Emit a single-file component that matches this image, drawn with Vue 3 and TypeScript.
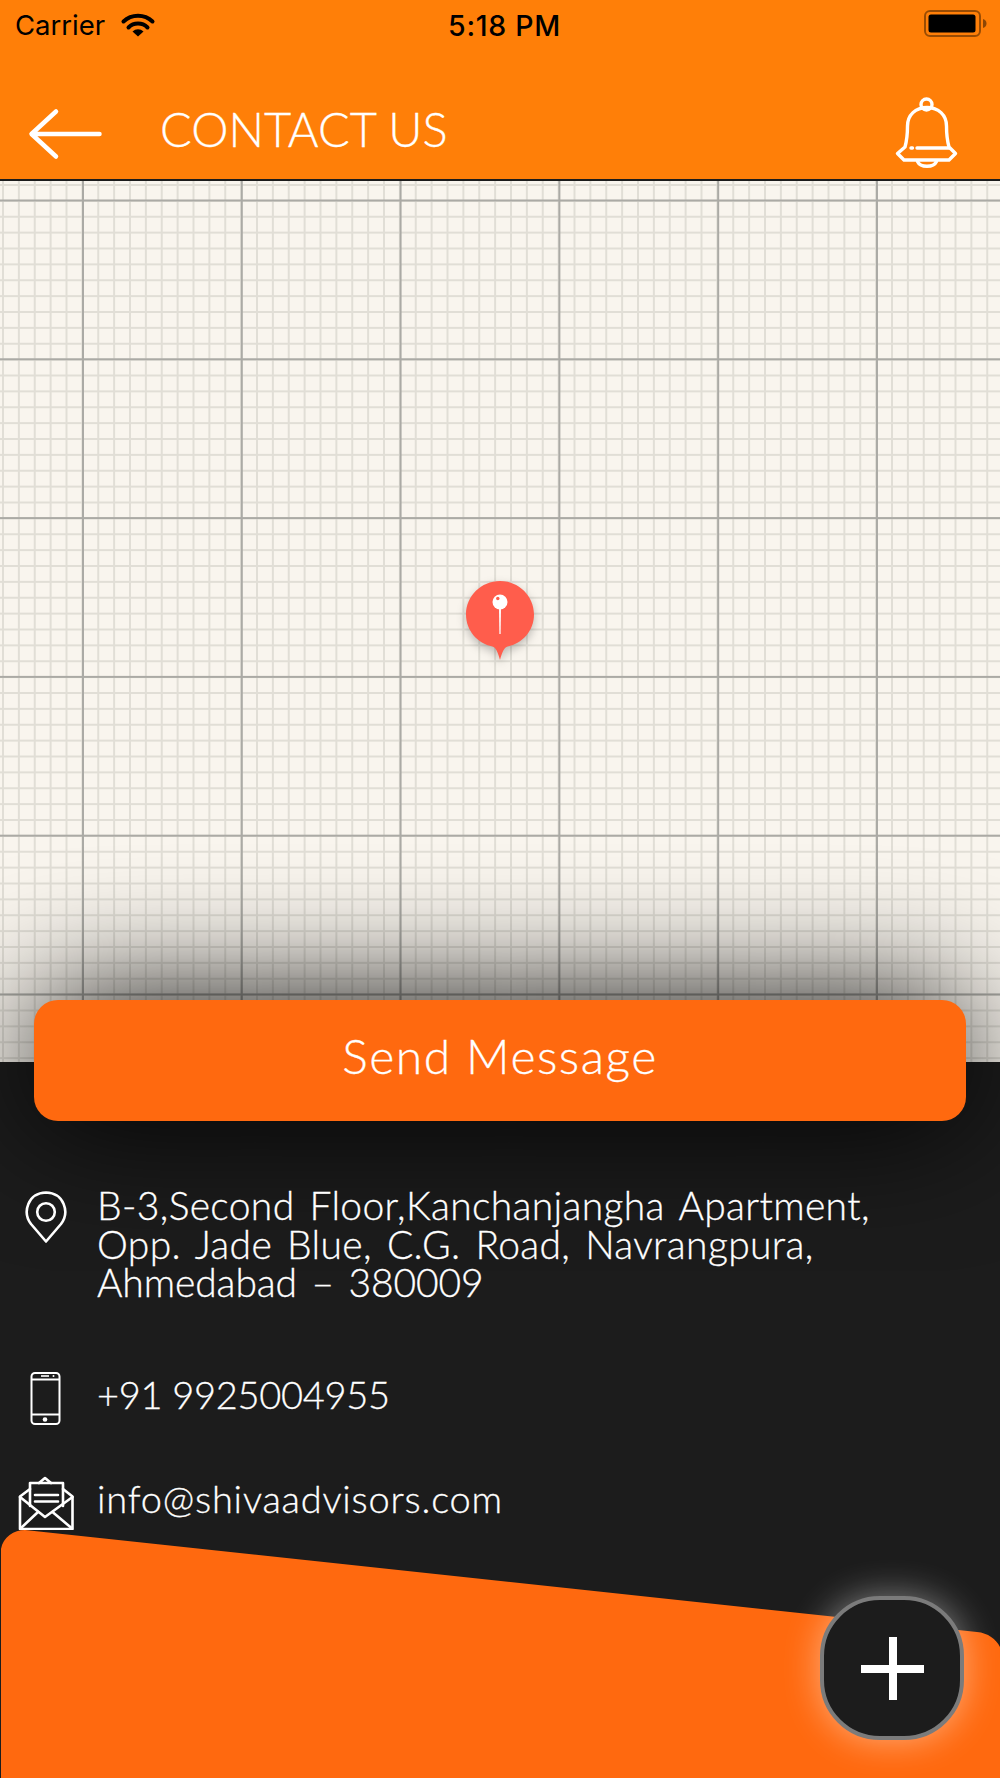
<script setup lang="ts">
const addressLines: string[] = [
  "B-3,Second Floor,Kanchanjangha Apartment,",
  "Opp. Jade Blue, C.G. Road, Navrangpura,",
  "Ahmedabad – 380009",
];
const phone = "+91 9925004955";
const email = "info@shivaadvisors.com";
</script>

<template>
  <div class="contact-page">
    <header class="app-header">
      <div class="status-bar">
        <div class="status-left">
          <span class="carrier">Carrier</span>
          <svg class="wifi" width="36" height="26" viewBox="120 11 36 26">
            <path d="M123.5 21.5a21 21 0 0 1 29 0" fill="none" stroke="#000" stroke-width="4" stroke-linecap="round" />
            <path d="M128.5 27.5a13.5 13.5 0 0 1 19 0" fill="none" stroke="#000" stroke-width="4" stroke-linecap="round" />
            <path d="M132.5 31.5a8 8 0 0 1 11 0l-5.500 5z" fill="#000" />
          </svg>
        </div>
        <span class="clock">5:18 PM</span>
        <svg class="battery" width="64" height="28" viewBox="0 0 64 28">
          <rect x="1" y="1" width="55" height="25" rx="5" fill="none" stroke="#000" stroke-opacity="0.4" stroke-width="2" />
          <rect x="4.500" y="4.500" width="47" height="18" rx="2.500" fill="#000" />
          <path d="M59 9c2.500 .5 3.500 2.500 3.500 4.500s-1 4-3.500 4.500z" fill="#000" fill-opacity="0.45" />
        </svg>
      </div>
      <nav class="nav-bar">
        <svg class="back" width="76" height="54" viewBox="28 106 76 54">
          <path d="M56 110.500 31.500 133 56 155.500M32 133h67.500" fill="none" stroke="#fff" stroke-width="4.500" stroke-linecap="round" stroke-linejoin="round" />
        </svg>
        <h1 class="title">CONTACT US</h1>
        <svg class="bell" width="64" height="76" viewBox="896 95 64 76">
          <g fill="none" stroke="#fff" stroke-width="3.400" stroke-linejoin="round" stroke-linecap="round">
            <circle cx="927.500" cy="103.500" r="5.500" />
            <path d="M906 146c2.500-9 2.500-17 2.500-21 0-11 8-18.500 19.500-18.500s19.500 7.500 19.500 18.500c0 4 0 12 2.500 21l6.500 6.500-6.500 6.500h-45l-6.500-6.500z" />
            <path d="M918 147h32M912 147h1.500" />
            <path d="M918.500 160.500a10 7 0 0 0 19 0" />
          </g>
        </svg>
      </nav>
    </header>

    <section class="map">
      <svg class="pin" width="72" height="84" viewBox="0 0 72 84">
        <path d="M36 2C17.200 2 2 17 2 35.500c0 16 11.500 29 26.500 32 3 .8 5.500 5.500 7.500 13.500 2-8 4.500-12.700 7.500-13.500C58.500 64.500 70 51.500 70 35.500 70 17 54.800 2 36 2z" fill="#ff5d4c" />
        <path d="M35 28h2l-.4 27h-1.200z" fill="#fff" />
        <circle cx="36" cy="23" r="7.500" fill="#fff" />
        <circle cx="33.800" cy="19.500" r="1.700" fill="#ff5d4c" />
      </svg>
    </section>

    <section class="panel">
      <svg class="wave" width="1000" height="249" viewBox="0 0 1000 249">
        <path d="M1 249V20C3 8 14 1 25 1L977 103c11 1 19 7 23 15v131z" fill="#ff690f" />
      </svg>

      <button class="send-btn">Send Message</button>

      <div class="info-list">
        <div class="info-row address">
          <div class="info-icon">
            <svg width="44" height="54" viewBox="24 1190 44 54">
              <path d="M46 1241.500 31 1224c-9-12-3-31 15-31.500 18 .5 24 19.500 15 31.500z" fill="none" stroke="#fff" stroke-width="2.600" stroke-linejoin="round" />
              <circle cx="46" cy="1212" r="8.800" fill="none" stroke="#fff" stroke-width="2.600" />
            </svg>
          </div>
          <p class="info-text">
            <span v-for="line in addressLines" :key="line" class="line">{{ line }}</span>
          </p>
        </div>

        <div class="info-row phone">
          <div class="info-icon">
            <svg width="32" height="56" viewBox="31 1371 32 56">
              <g fill="none" stroke="#fff" stroke-width="2">
                <rect x="32.500" y="1373" width="28" height="51" rx="3.500" />
                <path d="M33 1379.500h27M33 1414.500h27" />
              </g>
              <path d="M42 1376h8" stroke="#fff" stroke-width="1.600" />
              <circle cx="54.500" cy="1376" r="1" fill="#fff" />
              <circle cx="46" cy="1419.500" r="2.300" fill="#fff" />
            </svg>
          </div>
          <p class="info-text">{{ phone }}</p>
        </div>

        <div class="info-row mail">
          <div class="info-icon">
            <svg width="56" height="54" viewBox="18 1475 56 54">
              <g fill="none" stroke="#fff" stroke-width="2.600" stroke-linejoin="round" stroke-linecap="round">
                <path d="M30 1488l-10 7.500v32.500h52.500v-32.500l-9.500-7.500" />
                <path d="M39 1482l6-5 6 5" />
                <path d="M30 1505v-23h33v23" />
                <path d="M20 1496l25 20 27.500-20" />
                <path d="M21 1527l17-16M71.500 1527l-19-16" />
                <path d="M35 1494h23M35 1500.500h23" />
              </g>
            </svg>
          </div>
          <p class="info-text">{{ email }}</p>
        </div>
      </div>

      <button class="fab" aria-label="Add">
        <span class="plus"></span>
      </button>
    </section>
  </div>
</template>

<style>
html,
body {
  margin: 0;
  background: #1c1c1c;
}
</style>

<style scoped>
.contact-page {
  display: flex;
  flex-direction: column;
  width: 1000px;
  height: 1778px;
  overflow: hidden;
  font-family: Lato, "Open Sans", sans-serif;
}

.app-header {
  flex: none;
  height: 179px;
  background: #ff7f08;
  border-bottom: 2px solid #1c1c1c;
}

.status-bar {
  display: flex;
  align-items: center;
  justify-content: space-between;
  height: 48px;
  padding: 0 12px 0 15px;
  position: relative;
  font-family: Inter, Roboto, sans-serif;
  color: #000;
}

.status-left {
  display: flex;
  align-items: center;
  gap: 15px;
}

.carrier {
  font-size: 27.5px;
  font-weight: 400;
  padding-top: 2px;
}

.wifi {
  display: block;
}

.clock {
  position: absolute;
  left: 0;
  right: 0;
  text-align: center;
  margin-left: 9px;
  padding-top: 3px;
  font-size: 28.5px;
  font-weight: 500;
  letter-spacing: 0.7px;
}

.battery {
  display: block;
}

.nav-bar {
  display: flex;
  align-items: center;
  box-sizing: border-box;
  height: 131px;
  padding: 40px 41px 0 28px;
}

.back {
  flex: none;
}

.title {
  flex: 1;
  margin: -9px 0 0 56px;
  font-size: 47px;
  font-weight: 300;
  color: #fff;
  -webkit-text-stroke: 0.3px #fff;
}

.map {
  flex: none;
  height: 881px;
  position: relative;
  background-color: #f9f5ee;
  background-image:
    linear-gradient(to right, #abaaa5 1.5px, transparent 1.5px),
    linear-gradient(to bottom, #abaaa5 1.5px, transparent 1.5px),
    linear-gradient(to right, #e1ded6 1.5px, transparent 1.5px),
    linear-gradient(to bottom, #e1ded6 1.5px, transparent 1.5px);
  background-size: 158.8px 158.8px, 158.8px 158.8px, 15.88px 15.88px, 15.88px 15.88px;
  background-position: 82px 0, 0 18.5px, 2px 0, 0 3px;
}

.pin {
  position: absolute;
  left: 464px;
  top: 398px;
  filter: drop-shadow(0 4px 5px rgba(0, 0, 0, 0.25));
}

.panel {
  flex: 1;
  display: flex;
  flex-direction: column;
  position: relative;
  background: #1c1c1c;
}

.wave {
  position: absolute;
  left: 0;
  bottom: 0;
  display: block;
}

.send-btn {
  flex: none;
  position: relative;
  height: 121px;
  margin: -62px 34px 0;
  padding: 0 0 10px;
  border: 0;
  border-radius: 24px;
  background: #ff690f;
  color: #fff;
  font-family: Lato, sans-serif;
  font-size: 48px;
  font-weight: 300;
  letter-spacing: 1.5px;
  -webkit-text-stroke: 0.3px #fff;
  box-shadow: 0 0 130px #000;
}

.info-list {
  position: relative;
  display: flex;
  flex-direction: column;
  margin-top: 69px;
}

.info-row {
  display: flex;
  align-items: center;
  gap: 5px;
}

.info-row.address {
  align-items: flex-start;
}

.info-row.address .info-text {
  margin-top: -4px;
  font-size: 39px;
  letter-spacing: 0.35px;
  word-spacing: 4px;
}

.info-row.phone {
  margin-top: 69px;
}

.info-row.mail {
  margin-top: 49px;
}

.info-icon {
  flex: none;
  width: 92px;
  display: flex;
  justify-content: center;
}

.info-icon svg {
  display: block;
}

.info-text {
  margin: 0;
  color: #fff;
  font-size: 38px;
  font-weight: 300;
  line-height: 38.5px;
  letter-spacing: 0.8px;
  word-spacing: 0;
  -webkit-text-stroke: 0.3px #fff;
}

.phone .info-text {
  margin-top: -8px;
  letter-spacing: -0.3px;
}

.mail .info-text {
  margin-top: -8px;
}

.line {
  display: block;
  white-space: nowrap;
}

.line:last-child {
  letter-spacing: -0.1px;
}

.fab {
  position: absolute;
  left: 820px;
  top: 534px;
  width: 144px;
  height: 144px;
  box-sizing: border-box;
  padding: 0;
  border: 4px solid #7b7b7b;
  border-radius: 60px;
  background: #1c1c1c;
  box-shadow: 0 0 36px rgba(255, 255, 255, 0.45);
}

.plus {
  position: absolute;
  left: 37px;
  top: 37px;
  width: 63px;
  height: 63px;
  background:
    linear-gradient(#fff, #fff) center / 8px 100% no-repeat,
    linear-gradient(#fff, #fff) center / 100% 8px no-repeat;
}
</style>
